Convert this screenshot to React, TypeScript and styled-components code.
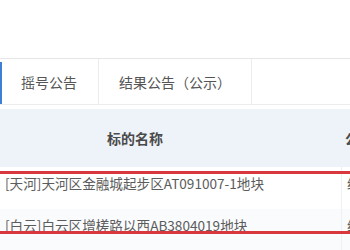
import React from "react";
import styled, { createGlobalStyle } from "styled-components";

const GlobalStyle = createGlobalStyle`
  html, body {
    margin: 0;
    padding: 0;
    background: #ffffff;
    font-family: "Noto Sans CJK SC", "Noto Sans", sans-serif;
  }
  #root {
    width: 350px;
    height: 250px;
    overflow: hidden;
  }
`;

const Page = styled.div`
  position: relative;
  width: 350px;
  height: 250px;
  padding-top: 58px;
  box-sizing: border-box;
  overflow: hidden;
`;

const TabBar = styled.div`
  display: flex;
  height: 47px;
  border-top: 1px solid #e6e6e6;
  border-bottom: 1px solid #ededed;
  box-sizing: border-box;
`;

const Tab = styled.div<{ $active?: boolean; $width: number }>`
  position: relative;
  display: flex;
  align-items: center;
  justify-content: center;
  width: ${({ $width }) => $width}px;
  border-right: 1px solid #ececec;
  font-size: 14px;
  color: #555;
  &::before {
    content: "";
    display: ${({ $active }) => ($active ? "block" : "none")};
    position: absolute;
    left: 0;
    top: 3px;
    bottom: 0;
    width: 2px;
    background: #3f7fd4;
  }
`;

const Table = styled.div`
  margin-top: 4px;
`;

const HeadRow = styled.div`
  display: grid;
  grid-template-columns: 341px 1fr;
  height: 58px;
  background: #eef2f9;
  align-items: center;
  font-size: 14px;
  font-weight: 700;
  color: #4a4a4a;
`;

const HeadCell = styled.div<{ $padRight?: number }>`
  text-align: center;
  padding-right: ${({ $padRight = 0 }) => $padRight}px;
  white-space: nowrap;
  overflow: hidden;
  padding-left: 4px;
`;

const Row = styled.div<{ $striped?: boolean }>`
  display: grid;
  grid-template-columns: 341px 1fr;
  height: 42px;
  background: ${({ $striped }) => ($striped ? "#fafbfd" : "#ffffff")};
  font-size: 13.6px;
  color: #5c5c5c;
`;

const Cell = styled.div<{ $divider?: boolean }>`
  padding: 7px 0 0 5px;
  line-height: 18px;
  white-space: nowrap;
  overflow: hidden;
  border-left: ${({ $divider }) => ($divider ? "1px solid #eef0f4" : "none")};
`;

const Highlight = styled.div`
  position: absolute;
  left: -4px;
  right: -4px;
  top: 171px;
  height: 63px;
  box-sizing: border-box;
  border: 3px solid #d8383d;
  pointer-events: none;
`;

const rows = [
  { name: "[天河]天河区金融城起步区AT091007-1地块", type: "经营性用地" },
  { name: "[白云]白云区增槎路以西AB3804019地块", type: "经营性用地" },
];

export default function App() {
  return (
    <>
      <GlobalStyle />
      <Page>
        <TabBar>
          <Tab $active $width={98}>摇号公告</Tab>
          <Tab $width={152}>结果公告（公示）</Tab>
        </TabBar>
        <Table>
          <HeadRow>
            <HeadCell $padRight={75}>标的名称</HeadCell>
            <HeadCell>公告类型</HeadCell>
          </HeadRow>
          {rows.map((r, i) => (
            <Row key={r.name} $striped={i % 2 === 1}>
              <Cell>{r.name}</Cell>
              <Cell $divider>{r.type}</Cell>
            </Row>
          ))}
        </Table>
        <Highlight />
      </Page>
    </>
  );
}
